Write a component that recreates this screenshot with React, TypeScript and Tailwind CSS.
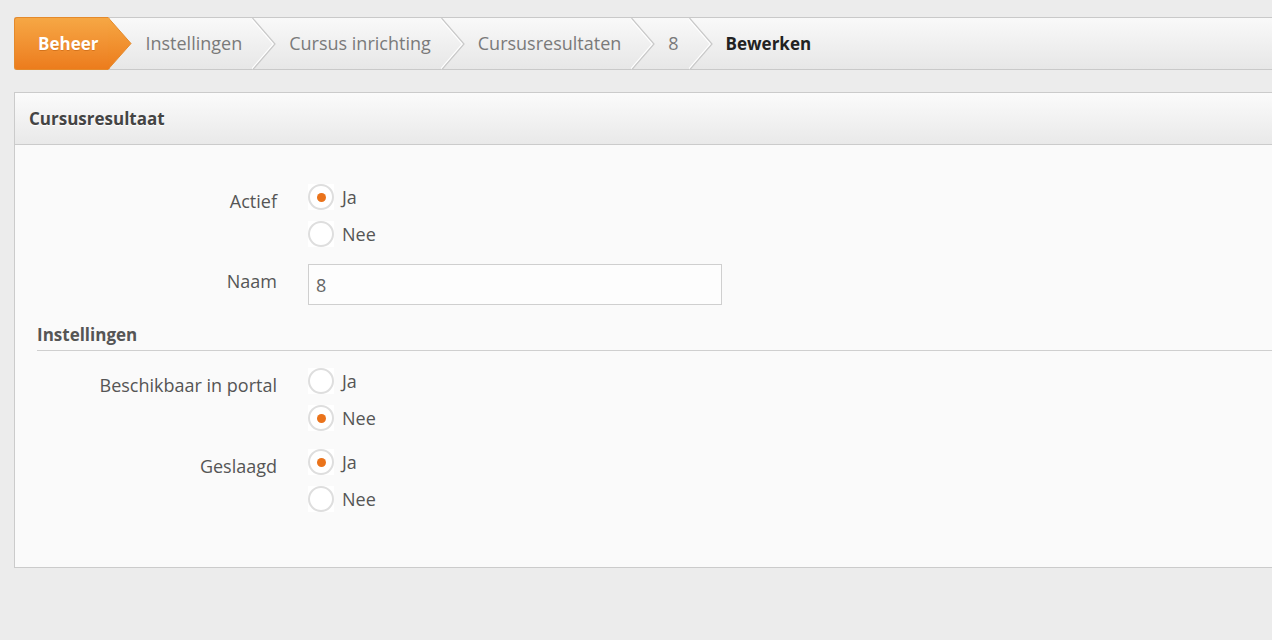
import React from "react";

type Crumb = { label: string; current?: boolean };

const crumbs: Crumb[] = [
  { label: "Instellingen" },
  { label: "Cursus inrichting" },
  { label: "Cursusresultaten" },
  { label: "8" },
  { label: "Bewerken", current: true },
];

function Chevron() {
  return (
    <svg width="24" height="52" viewBox="0 0 24 52" className="shrink-0">
      <polyline points="0.5,0 23,26 0.5,52" fill="none" stroke="#ffffff" strokeWidth="1.5" transform="translate(-1.5,0)" />
      <polyline points="0.5,0 23,26 0.5,52" fill="none" stroke="#c9c9c9" strokeWidth="1.2" />
    </svg>
  );
}

function Breadcrumbs() {
  return (
    <nav className="flex h-[53px] items-stretch rounded-l-[3px] border-y border-[#c9c9c9] bg-gradient-to-b from-[#f9f9f9] to-[#e7e7e7] text-[18px]">
      <div className="flex items-stretch">
        <span className="-my-px flex items-center rounded-l-[3px] border border-r-0 border-[#e48a2c] bg-gradient-to-b from-[#f6a744] to-[#ec7c1c] pl-[23px] pr-[10px] text-[17px] font-bold text-white [text-shadow:0_1px_0_rgba(160,70,0,0.35)]">
          Beheer
        </span>
        <svg width="24" height="53" viewBox="0 0 24 53" className="-my-px shrink-0" preserveAspectRatio="none">
          <defs>
            <linearGradient id="tip" x1="0" y1="0" x2="0" y2="1">
              <stop offset="0" stopColor="#f6a744" />
              <stop offset="1" stopColor="#ec7c1c" />
            </linearGradient>
          </defs>
          <polygon points="0,0.5 23,26.5 0,52.5" fill="url(#tip)" stroke="#e48a2c" strokeWidth="1" />
          <rect x="0" y="1" width="1.5" height="51" fill="url(#tip)" />
        </svg>
      </div>
      {crumbs.map((c, i) => (
        <div key={c.label} className="flex items-stretch">
          <span
            className={
              c.current
                ? "flex items-center pl-[13px] pr-[12px] text-[17px] font-bold text-[#222]"
                : "flex items-center pl-[13px] pr-[10px] text-[#7a7a7a]"
            }
          >
            {c.label}
          </span>
          {i < crumbs.length - 1 && <Chevron />}
        </div>
      ))}
    </nav>
  );
}

function Radio({ checked, label }: { checked?: boolean; label: string }) {
  return (
    <label className="flex h-[26px] items-center">
      <span className="flex h-[26px] w-[26px] items-center justify-center bg-white">
        <span className="flex h-[26px] w-[26px] items-center justify-center rounded-full border-2 border-[#dedede] bg-white">
          {checked && <span className="h-[9px] w-[9px] rounded-full bg-[#ea731b]" />}
        </span>
      </span>
      <span className="ml-[8px] text-[18px] text-[#555]">{label}</span>
    </label>
  );
}

function Field({ label, children }: { label: string; children: React.ReactNode }) {
  return (
    <div className="flex items-start">
      <div className="w-[263px] shrink-0 pr-[1px] pt-[4px] text-right text-[18px] leading-[26px] text-[#555]">{label}</div>
      <div className="ml-[30px] flex-1">{children}</div>
    </div>
  );
}

function YesNo({ value }: { value: boolean }) {
  return (
    <div className="flex flex-col gap-[11px]">
      <Radio label="Ja" checked={value} />
      <Radio label="Nee" checked={!value} />
    </div>
  );
}

export default function App() {
  return (
    <div className="min-h-[640px] overflow-hidden bg-[#ececec] pl-[14px] pt-[17px] font-['Open_Sans',sans-serif]">
      <div className="mr-[-20px]">
        <Breadcrumbs />
      </div>

      <section className="mr-[-20px] mt-[22px] border border-[#cbcbcb] bg-[#fafafa]">
        <header className="flex h-[52px] items-center border-b border-[#cbcbcb] bg-gradient-to-b from-[#fbfbfb] to-[#e9e9e9] pl-[14px]">
          <h1 className="text-[17px] font-bold text-[#444] [text-shadow:0_1px_0_#fff]">Cursusresultaat</h1>
        </header>

        <div className="pb-[55px] pt-[39px]">
          <Field label="Actief">
            <YesNo value={true} />
          </Field>

          <div className="mt-[17px]">
            <Field label="Naam">
              <input
                readOnly
                value="8"
                className="h-[41px] w-[414px] border border-[#cfcfcf] bg-[#fdfdfd] px-[7px] text-[18px] text-[#666] outline-none"
              />
            </Field>
          </div>

          <h2 className="ml-[22px] mt-[17px] border-b border-[#cfcfcf] pb-[3px] text-[17px] font-bold leading-[25px] text-[#555]">
            Instellingen
          </h2>

          <div className="mt-[17px]">
            <Field label="Beschikbaar in portal">
              <YesNo value={false} />
            </Field>
          </div>

          <div className="mt-[18px]">
            <Field label="Geslaagd">
              <YesNo value={true} />
            </Field>
          </div>
        </div>
      </section>
    </div>
  );
}
